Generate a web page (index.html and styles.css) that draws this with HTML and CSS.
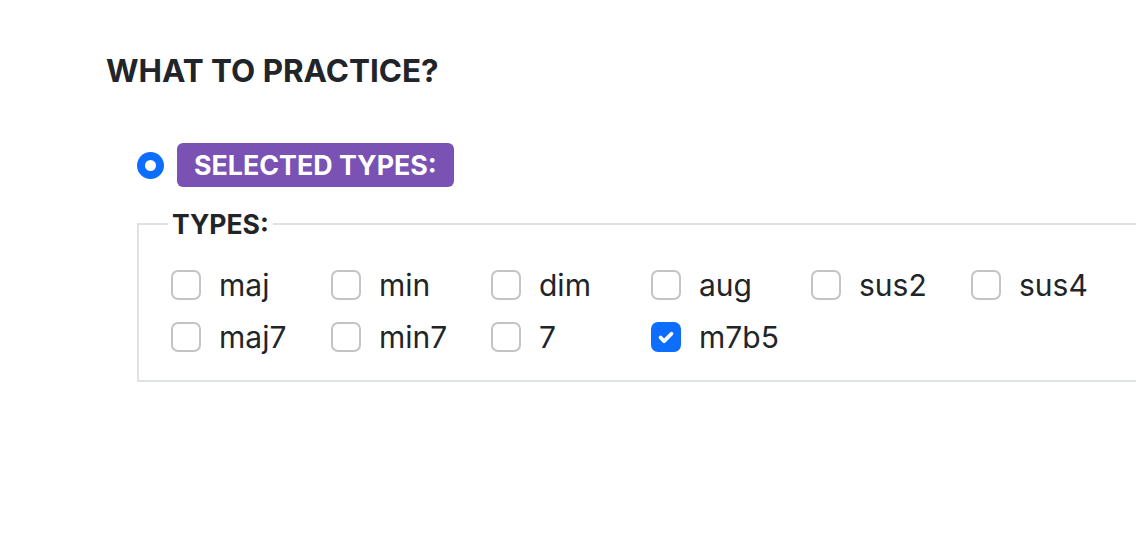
FILE: index.html
```html
<!DOCTYPE html>
<html lang="en">
<head>
<meta charset="utf-8">
<title>What to practice</title>
<link rel="stylesheet" href="styles.css">
</head>
<body>
<main class="page">
  <h2 class="title">WHAT TO PRACTICE?</h2>
  <div class="option">
    <span class="radio"><span class="radio-dot"></span></span>
    <span class="badge">SELECTED TYPES:</span>
  </div>
  <fieldset class="types">
    <legend class="types-legend">TYPES:</legend>
    <div class="grid">
      <label class="check"><span class="box"></span><span class="text">maj</span></label>
      <label class="check"><span class="box"></span><span class="text">min</span></label>
      <label class="check"><span class="box"></span><span class="text">dim</span></label>
      <label class="check"><span class="box"></span><span class="text">aug</span></label>
      <label class="check"><span class="box"></span><span class="text">sus2</span></label>
      <label class="check"><span class="box"></span><span class="text">sus4</span></label>
      <label class="check"><span class="box"></span><span class="text">maj7</span></label>
      <label class="check"><span class="box"></span><span class="text">min7</span></label>
      <label class="check"><span class="box"></span><span class="text">7</span></label>
      <label class="check"><span class="box checked"><svg viewBox="0 0 20 20" width="22" height="22"><path d="M5 10.5l3.3 3.3L15 7" fill="none" stroke="#fff" stroke-width="3.4" stroke-linecap="round" stroke-linejoin="round"/></svg></span><span class="text">m7b5</span></label>
    </div>
  </fieldset>
</main>
</body>
</html>
```

FILE: styles.css
```css
html, body {
  margin: 0;
  padding: 0;
  background: #ffffff;
  overflow: hidden;
}

body {
  font-family: Inter, "Noto Sans", sans-serif;
  color: #212529;
}

.page {
  padding: 52px 0 0 106px;
}

.title {
  margin: 0;
  font-size: 31.4px;
  line-height: 38px;
  font-weight: 700;
}

.option {
  display: flex;
  align-items: center;
  gap: 13px;
  margin: 53px 0 0 31px;
}

.radio {
  width: 27px;
  height: 27px;
  border-radius: 50%;
  background: #0d6efd;
  display: flex;
  align-items: center;
  justify-content: center;
}

.radio-dot {
  width: 11px;
  height: 11px;
  border-radius: 50%;
  background: #ffffff;
}

.badge {
  display: inline-flex;
  align-items: center;
  height: 44px;
  padding: 0 17px;
  border-radius: 6px;
  background: #7952b3;
  color: #ffffff;
  font-size: 26.8px;
  font-weight: 700;
}

.types {
  margin: 22px 0 0 31px;
  width: 1100px;
  border: 2px solid #dee2e6;
  padding: 28px 0 25px 32px;
}

.types-legend {
  margin-left: -3px;
  padding: 0 4px;
  font-size: 26.5px;
  line-height: 30px;
  font-weight: 700;
}

.grid {
  display: grid;
  grid-template-columns: repeat(6, 160px);
  row-gap: 16px;
}

.check {
  display: flex;
  align-items: center;
  gap: 18px;
  height: 36px;
  font-size: 30px;
  line-height: 36px;
}

.box {
  box-sizing: border-box;
  width: 30px;
  height: 30px;
  border: 2px solid #c4c4c4;
  border-radius: 7px;
  display: flex;
  align-items: center;
  justify-content: center;
}

.box.checked {
  background: #0d6efd;
  border-color: #0d6efd;
}
```
